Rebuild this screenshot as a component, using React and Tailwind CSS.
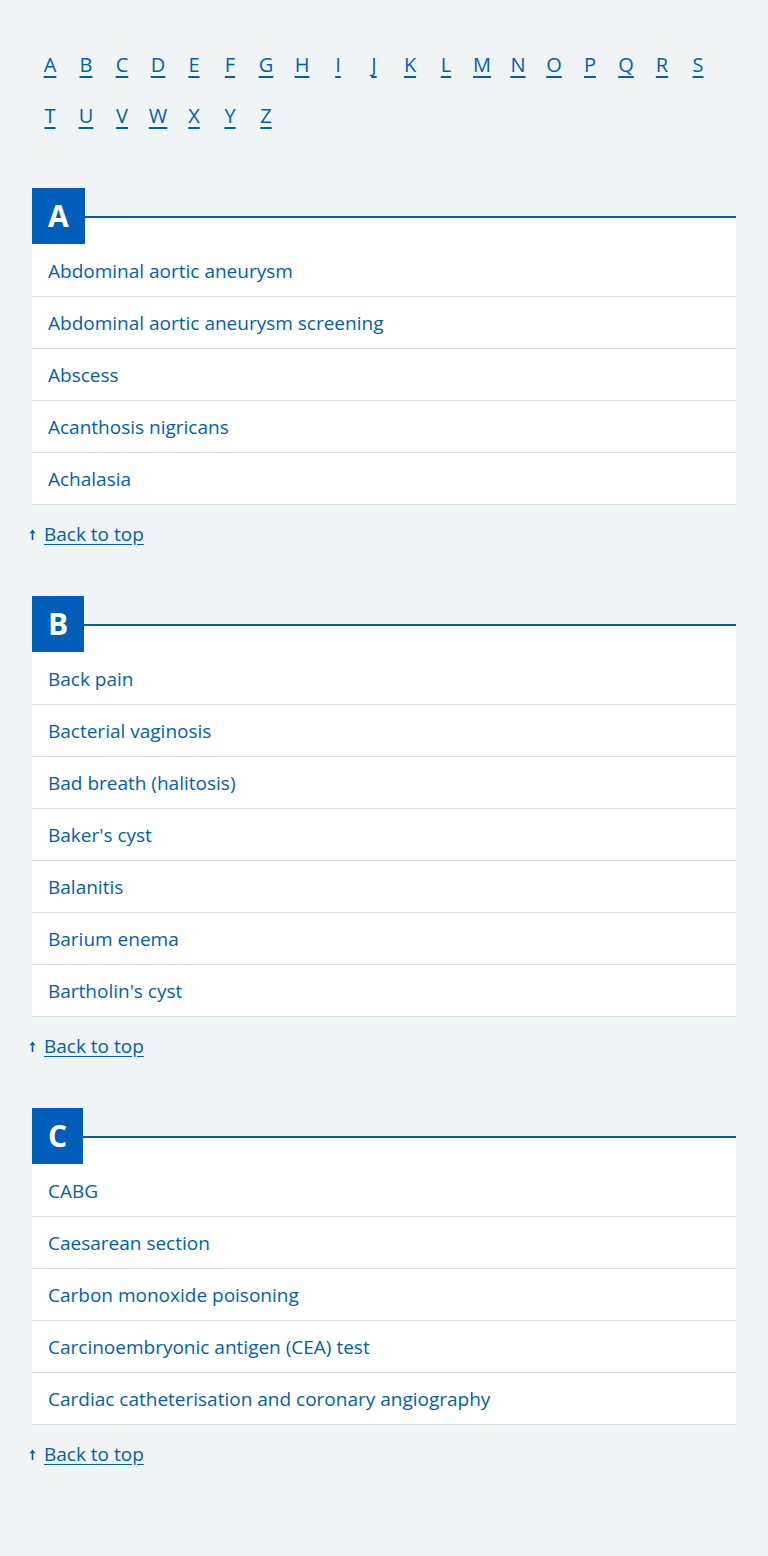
import React from "react";

const letters = "ABCDEFGHIJKLMNOPQRSTUVWXYZ".split("");

const sections = [
  {
    letter: "A",
    items: [
      "Abdominal aortic aneurysm",
      "Abdominal aortic aneurysm screening",
      "Abscess",
      "Acanthosis nigricans",
      "Achalasia",
    ],
  },
  {
    letter: "B",
    items: [
      "Back pain",
      "Bacterial vaginosis",
      "Bad breath (halitosis)",
      "Baker's cyst",
      "Balanitis",
      "Barium enema",
      "Bartholin's cyst",
    ],
  },
  {
    letter: "C",
    items: [
      "CABG",
      "Caesarean section",
      "Carbon monoxide poisoning",
      "Carcinoembryonic antigen (CEA) test",
      "Cardiac catheterisation and coronary angiography",
    ],
  },
];

function Section({ letter, items }) {
  return (
    <div className="flex flex-col pt-[28px]">
      <div className="relative border-t-2 border-[#005eb8] bg-white pt-[27px]">
        <h2 className="absolute left-0 top-[-30px] flex h-[56px] items-center bg-[#005eb8] px-[16px] text-[30px] font-bold leading-none text-white">
          {letter}
        </h2>
        <ul>
          {items.map((it) => (
            <li key={it} className="flex h-[52px] items-center border-b border-[#d8dde0] px-[16px]">
              <a href="#" className="text-[19px] leading-[28px] text-[#005eb8]">
                {it}
              </a>
            </li>
          ))}
        </ul>
      </div>
      <div className="mt-[15px] flex h-[28px] items-center text-[19px] leading-[28px] text-[#005eb8]">
        <svg width="7" height="11" viewBox="0 0 7 11" className="ml-[-3px] mr-[8px] mt-[1px]" aria-hidden="true">
          <path d="M3.5 2.5 V11" stroke="#005eb8" strokeWidth="1.6" />
          <path d="M0.6 4.2 L3.5 0.6 L6.4 4.2 Z" fill="#005eb8" />
        </svg>
        <a href="#" className="underline underline-offset-[3px]">
          Back to top
        </a>
      </div>
    </div>
  );
}

export default function App() {
  return (
    <div
      className="min-h-[1556px] bg-[#f0f4f5] px-[32px] pt-[39px]"
      style={{ fontFamily: '"Open Sans", "Noto Sans", Arial, sans-serif' }}
    >
      <ul className="flex flex-wrap">
        {letters.map((l) => (
          <li key={l} className="flex h-[51px] w-[36px] items-center justify-center">
            <a href="#" className="text-[20px] leading-none text-[#005eb8] underline underline-offset-[4px]">
              {l}
            </a>
          </li>
        ))}
      </ul>
      <div className="mt-[47px] flex flex-col gap-[48px]">
        {sections.map((s) => (
          <Section key={s.letter} {...s} />
        ))}
      </div>
    </div>
  );
}
